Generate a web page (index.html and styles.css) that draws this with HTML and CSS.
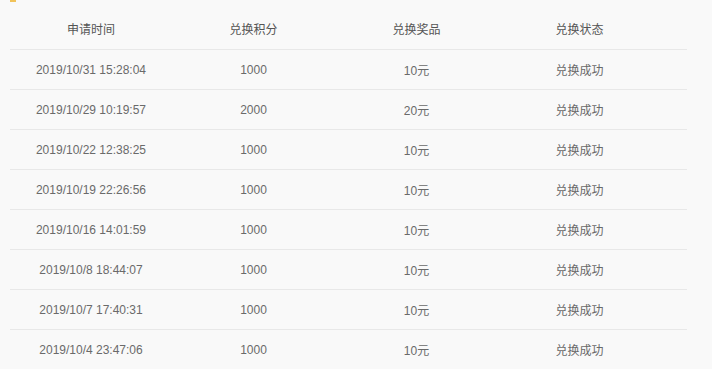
FILE: index.html
```html
<!DOCTYPE html>
<html>
<head>
<meta charset="utf-8">
<link rel="stylesheet" href="styles.css">
</head>
<body>
<div class="panel">
  <div class="topbar"><span class="mark"></span></div>
  <div class="table">
    <div class="row head">
      <div class="cell">申请时间</div><div class="cell">兑换积分</div><div class="cell">兑换奖品</div><div class="cell">兑换状态</div>
    </div>
    <div class="row"><div class="cell">2019/10/31 15:28:04</div><div class="cell">1000</div><div class="cell">10元</div><div class="cell">兑换成功</div></div>
    <div class="row"><div class="cell">2019/10/29 10:19:57</div><div class="cell">2000</div><div class="cell">20元</div><div class="cell">兑换成功</div></div>
    <div class="row"><div class="cell">2019/10/22 12:38:25</div><div class="cell">1000</div><div class="cell">10元</div><div class="cell">兑换成功</div></div>
    <div class="row"><div class="cell">2019/10/19 22:26:56</div><div class="cell">1000</div><div class="cell">10元</div><div class="cell">兑换成功</div></div>
    <div class="row"><div class="cell">2019/10/16 14:01:59</div><div class="cell">1000</div><div class="cell">10元</div><div class="cell">兑换成功</div></div>
    <div class="row"><div class="cell">2019/10/8 18:44:07</div><div class="cell">1000</div><div class="cell">10元</div><div class="cell">兑换成功</div></div>
    <div class="row"><div class="cell">2019/10/7 17:40:31</div><div class="cell">1000</div><div class="cell">10元</div><div class="cell">兑换成功</div></div>
    <div class="row last"><div class="cell">2019/10/4 23:47:06</div><div class="cell">1000</div><div class="cell">10元</div><div class="cell">兑换成功</div></div>
  </div>
</div>
</body>
</html>
```
FILE: styles.css
```css
html, body {
  margin: 0;
  padding: 0;
  background: #ffffff;
  font-family: "Liberation Sans", "Noto Sans CJK SC", sans-serif;
  font-size: 12px;
  color: #6a6a6a;
}
.panel {
  width: 712px;
  height: 369px;
  background: #f9f9f9;
  overflow: hidden;
}
.topbar {
  height: 8px;
  padding-left: 10px;
}
.mark {
  display: block;
  width: 6px;
  height: 2px;
  background: #f1c35a;
}
.table {
  margin-left: 10px;
  width: 677px;
}
.row {
  display: grid;
  grid-template-columns: 162px 163px 163px 163px 1fr;
  height: 39px;
  align-items: center;
  border-bottom: 1px solid #e8e8e8;
}
.row.head {
  height: 41px;
  color: #555;
}
.row.last {
  border-bottom: none;
}
.cell {
  text-align: center;
}
```
